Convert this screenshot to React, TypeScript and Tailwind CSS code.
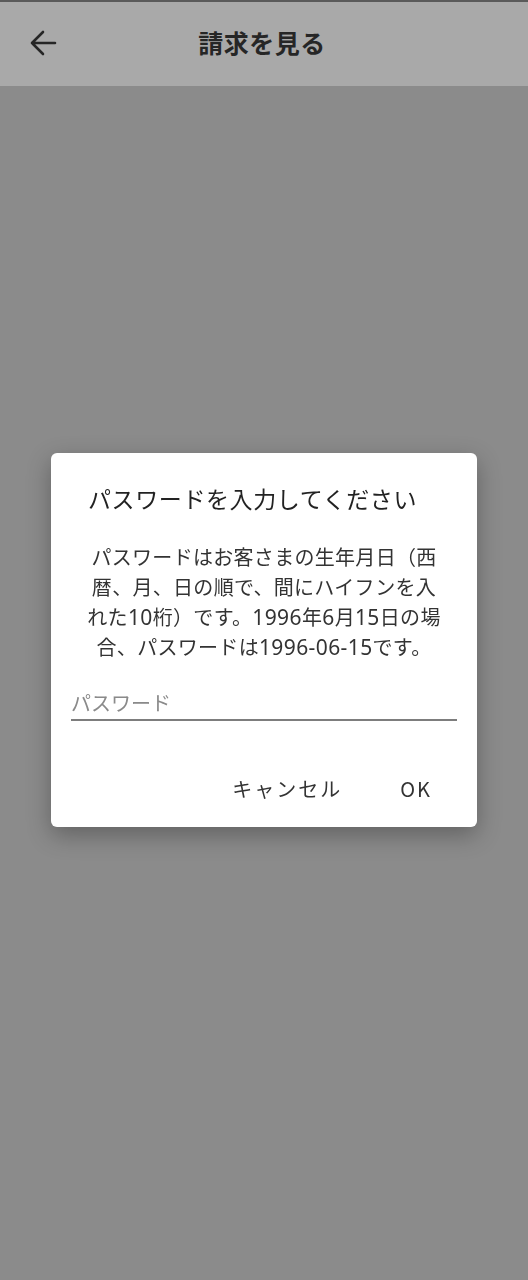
import React from "react";

const font = { fontFamily: '"Noto Sans CJK JP", "Noto Sans", sans-serif' };

const BackArrow: React.FC = () => (
  <svg width="30" height="30" viewBox="0 0 30 30" fill="none">
    <path
      d="M27 15H4M15 4L4 15l11 11"
      stroke="#262626"
      strokeWidth="2.6"
      strokeLinecap="round"
      strokeLinejoin="round"
    />
  </svg>
);

// latin runs are set a touch larger, like the device's fallback font
const L: React.FC<{ children: React.ReactNode }> = ({ children }) => (
  <span className="text-[21px] tracking-[0.4px] [font-family:'Noto_Sans',sans-serif]">{children}</span>
);

const App: React.FC = () => {
  return (
    <div className="min-h-screen flex flex-col bg-[#8b8b8b]" style={font}>
      {/* Header */}
      <div className="h-[86px] flex items-center bg-[#a9a9a9] border-t-2 border-[#5a5a5a]">
        <div className="pl-[28px] pb-[3px]">
          <BackArrow />
        </div>
        <div className="flex-1 text-center pr-[62px] pb-[2px] text-[25px] font-bold text-[#262626] tracking-[0.5px]">
          請求を見る
        </div>
      </div>
      <div className="flex-1" />

      {/* Dialog */}
      <div className="fixed inset-0 flex items-center justify-center px-[51px]">
        <div className="w-full bg-white rounded-[6px] shadow-[0_8px_24px_rgba(0,0,0,0.3)] pt-[30px] pb-[23px] px-[20px] flex flex-col">
          <div className="pl-[17px] text-[23px] leading-[30px] tracking-[0.6px] text-[#222]">
            パスワードを入力してください
          </div>
          <div className="mt-[29px] text-center text-[20px] leading-[30px] tracking-[0.3px] text-[#333]">
            パスワードはお客さまの生年月日（西
            <br />
            暦、月、日の順で、間にハイフンを入
            <br />
            れた<L>10</L>桁）です。<L>1996</L>年<L>6</L>月<L>15</L>日の場
            <br />
            合、パスワードは<L>1996-06-15</L>です。
          </div>
          <div className="mt-[26px] border-b-2 border-[#7d7d7d]">
            <div className="text-[20px] leading-[30px] text-[#8a8a8a] pb-[1px]">パスワード</div>
          </div>
          <div className="mt-[53px] flex justify-end items-center gap-[58px] pr-[25px] text-[20px] leading-[30px] text-[#333] tracking-[2px]">
            <span>キャンセル</span>
            <span>OK</span>
          </div>
        </div>
      </div>
    </div>
  );
};

export default App;
